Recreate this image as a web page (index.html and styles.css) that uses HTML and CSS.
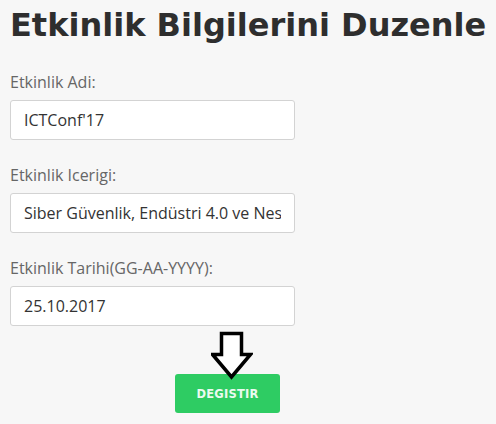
FILE: index.html
```html
<!DOCTYPE html>
<html lang="tr">
<head>
<meta charset="utf-8">
<title>Etkinlik Bilgilerini Duzenle</title>
<link rel="stylesheet" href="styles.css">
</head>
<body>
<main class="page">
  <h1 class="title">Etkinlik Bilgilerini Duzenle</h1>
  <form class="form">
    <div class="group">
      <label class="label" for="ad">Etkinlik Adi:</label>
      <input class="input" id="ad" type="text" value="ICTConf'17">
    </div>
    <div class="group">
      <label class="label" for="icerik">Etkinlik Icerigi:</label>
      <input class="input" id="icerik" type="text" value="Siber Güvenlik, Endüstri 4.0 ve Nesnelerin İnterneti">
    </div>
    <div class="group">
      <label class="label" for="tarih">Etkinlik Tarihi(GG-AA-YYYY):</label>
      <input class="input" id="tarih" type="text" value="25.10.2017">
    </div>
    <div class="actions">
      <button class="btn" type="button">DEGISTIR</button>
    </div>
  </form>
  <svg class="arrow" width="42" height="50" viewBox="0 0 42 50" aria-hidden="true">
    <path d="M10.5 2.5 H30.5 V23.5 H39.5 L20.5 46 L1.5 23.5 H10.5 Z" fill="#fff" stroke="#000" stroke-width="3.5" stroke-linejoin="miter"/>
  </svg>
</main>
</body>
</html>
```
FILE: styles.css
```css
html, body {
  margin: 0;
  padding: 0;
  background: #f7f7f7;
}
.page {
  position: relative;
  width: 496px;
  height: 424px;
  padding: 0 10px;
  box-sizing: border-box;
  overflow: hidden;
}
.title {
  margin: 0;
  padding-top: 3px;
  font-family: "DejaVu Sans", sans-serif;
  font-weight: bold;
  font-size: 32px;
  letter-spacing: 0;
  line-height: 44px;
  color: #2e2e2e;
  white-space: nowrap;
}
.form {
  margin-top: 25px;
}
.group {
  display: flex;
  flex-direction: column;
  margin-bottom: 25px;
}
.label {
  font-family: "Open Sans", sans-serif;
  font-size: 16px;
  line-height: 20px;
  color: #666;
  margin-bottom: 8px;
}
.input {
  width: 285px;
  height: 40px;
  box-sizing: border-box;
  padding: 0 13px;
  border: 1px solid #d3d3d3;
  border-radius: 3px;
  background: #fff;
  font-family: "Open Sans", sans-serif;
  font-size: 16px;
  color: #333;
  outline: none;
}
.actions {
  display: flex;
  padding-left: 165px;
  padding-top: 23px;
}
.btn {
  width: 105px;
  height: 39px;
  border: none;
  border-radius: 3px;
  background: #2ecc63;
  color: #eafaf0;
  font-family: "DejaVu Sans", sans-serif;
  font-weight: bold;
  font-size: 11.5px;
  letter-spacing: 0.2px;
}
.arrow {
  position: absolute;
  left: 211px;
  top: 331px;
}
```
